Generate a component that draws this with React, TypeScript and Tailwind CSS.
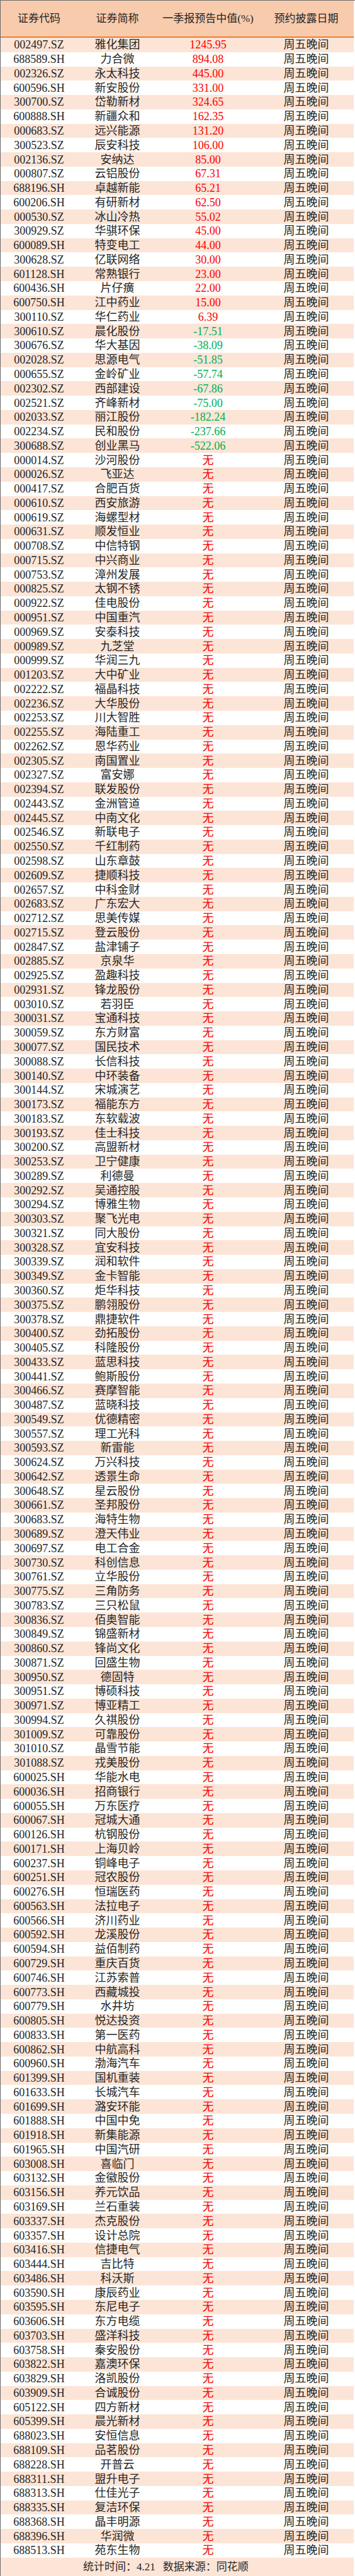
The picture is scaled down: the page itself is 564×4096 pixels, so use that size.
const raw = `002497.SZ 雅化集团 1245.95
688589.SH 力合微 894.08
002326.SZ 永太科技 445.00
600596.SH 新安股份 331.00
300700.SZ 岱勒新材 324.65
600888.SH 新疆众和 162.35
000683.SZ 远兴能源 131.20
300523.SZ 辰安科技 106.00
002136.SZ 安纳达 85.00
000807.SZ 云铝股份 67.31
688196.SH 卓越新能 65.21
600206.SH 有研新材 62.50
000530.SZ 冰山冷热 55.02
300929.SZ 华骐环保 45.00
600089.SH 特变电工 44.00
300628.SZ 亿联网络 30.00
601128.SH 常熟银行 23.00
600436.SH 片仔癀 22.00
600750.SH 江中药业 15.00
300110.SZ 华仁药业 6.39
300610.SZ 晨化股份 -17.51
300676.SZ 华大基因 -38.09
002028.SZ 思源电气 -51.85
000655.SZ 金岭矿业 -57.74
002302.SZ 西部建设 -67.86
002521.SZ 齐峰新材 -75.00
002033.SZ 丽江股份 -182.24
002234.SZ 民和股份 -237.66
300688.SZ 创业黑马 -522.06
000014.SZ 沙河股份
000026.SZ 飞亚达
000417.SZ 合肥百货
000610.SZ 西安旅游
000619.SZ 海螺型材
000631.SZ 顺发恒业
000708.SZ 中信特钢
000715.SZ 中兴商业
000753.SZ 漳州发展
000825.SZ 太钢不锈
000922.SZ 佳电股份
000951.SZ 中国重汽
000969.SZ 安泰科技
000989.SZ 九芝堂
000999.SZ 华润三九
001203.SZ 大中矿业
002222.SZ 福晶科技
002236.SZ 大华股份
002253.SZ 川大智胜
002255.SZ 海陆重工
002262.SZ 恩华药业
002305.SZ 南国置业
002327.SZ 富安娜
002394.SZ 联发股份
002443.SZ 金洲管道
002445.SZ 中南文化
002546.SZ 新联电子
002550.SZ 千红制药
002598.SZ 山东章鼓
002609.SZ 捷顺科技
002657.SZ 中科金财
002683.SZ 广东宏大
002712.SZ 思美传媒
002715.SZ 登云股份
002847.SZ 盐津铺子
002885.SZ 京泉华
002925.SZ 盈趣科技
002931.SZ 锋龙股份
003010.SZ 若羽臣
300031.SZ 宝通科技
300059.SZ 东方财富
300077.SZ 国民技术
300088.SZ 长信科技
300140.SZ 中环装备
300144.SZ 宋城演艺
300173.SZ 福能东方
300183.SZ 东软载波
300193.SZ 佳士科技
300200.SZ 高盟新材
300253.SZ 卫宁健康
300289.SZ 利德曼
300292.SZ 吴通控股
300294.SZ 博雅生物
300303.SZ 聚飞光电
300321.SZ 同大股份
300328.SZ 宜安科技
300339.SZ 润和软件
300349.SZ 金卡智能
300360.SZ 炬华科技
300375.SZ 鹏翎股份
300378.SZ 鼎捷软件
300400.SZ 劲拓股份
300405.SZ 科隆股份
300433.SZ 蓝思科技
300441.SZ 鲍斯股份
300466.SZ 赛摩智能
300487.SZ 蓝晓科技
300549.SZ 优德精密
300557.SZ 理工光科
300593.SZ 新雷能
300624.SZ 万兴科技
300642.SZ 透景生命
300648.SZ 星云股份
300661.SZ 圣邦股份
300683.SZ 海特生物
300689.SZ 澄天伟业
300697.SZ 电工合金
300730.SZ 科创信息
300761.SZ 立华股份
300775.SZ 三角防务
300783.SZ 三只松鼠
300836.SZ 佰奥智能
300849.SZ 锦盛新材
300860.SZ 锋尚文化
300871.SZ 回盛生物
300950.SZ 德固特
300951.SZ 博硕科技
300971.SZ 博亚精工
300994.SZ 久祺股份
301009.SZ 可靠股份
301010.SZ 晶雪节能
301088.SZ 戎美股份
600025.SH 华能水电
600036.SH 招商银行
600055.SH 万东医疗
600067.SH 冠城大通
600126.SH 杭钢股份
600171.SH 上海贝岭
600237.SH 铜峰电子
600251.SH 冠农股份
600276.SH 恒瑞医药
600563.SH 法拉电子
600566.SH 济川药业
600592.SH 龙溪股份
600594.SH 益佰制药
600729.SH 重庆百货
600746.SH 江苏索普
600773.SH 西藏城投
600779.SH 水井坊
600805.SH 悦达投资
600833.SH 第一医药
600862.SH 中航高科
600960.SH 渤海汽车
601399.SH 国机重装
601633.SH 长城汽车
601699.SH 潞安环能
601888.SH 中国中免
601918.SH 新集能源
601965.SH 中国汽研
603008.SH 喜临门
603132.SH 金徽股份
603156.SH 养元饮品
603169.SH 兰石重装
603337.SH 杰克股份
603357.SH 设计总院
603416.SH 信捷电气
603444.SH 吉比特
603486.SH 科沃斯
603590.SH 康辰药业
603595.SH 东尼电子
603606.SH 东方电缆
603703.SH 盛洋科技
603758.SH 秦安股份
603822.SH 嘉澳环保
603829.SH 洛凯股份
603909.SH 合诚股份
605122.SH 四方新材
605399.SH 晨光新材
688023.SH 安恒信息
688109.SH 品茗股份
688228.SH 开普云
688311.SH 盟升电子
688313.SH 仕佳光子
688335.SH 复洁环保
688368.SH 晶丰明源
688396.SH 华润微
688513.SH 苑东生物`;

type Row = { code: string; name: string; value: string };

const rows: Row[] = raw.split("\n").map((line) => {
  const [code, name, value] = line.trim().split(" ");
  return { code, name, value: value ?? "无" };
});

const headers = ["证券代码", "证券简称", "一季报预告中值(%)", "预约披露日期"];

const font = { fontFamily: '"Liberation Serif", "Noto Sans CJK SC", serif' };

export default function App() {
  return (
    <div className="w-[564px] bg-white text-[#262626]" style={font}>
      <div className="border-l border-t border-[#6b6b6b] pr-[2px]">
        {/* Header */}
        <div className="grid grid-cols-[122px_127px_161px_151px] h-[59px] bg-[#f8cbad] border-b-2 border-[#ed7d31] text-[17px]">
          {headers.map((h) => (
            <div key={h} className="flex items-center justify-center">
              {h}
            </div>
          ))}
        </div>

        {/* Body */}
        {rows.map((r, i) => (
          <div
            key={r.code}
            className={
              "grid grid-cols-[122px_127px_161px_151px] h-[22.77px] items-center text-[18px] leading-none " +
              (i % 2 === 0 ? "bg-[#fce4d6]" : "bg-white")
            }
          >
            <div className="text-center">{r.code}</div>
            <div className="text-center">{r.name}</div>
            <div
              className={
                "text-center " + (r.value.startsWith("-") ? "text-[#00b050]" : "text-[#ff0000]")
              }
            >
              {r.value}
            </div>
            <div className="text-center">周五晚间</div>
          </div>
        ))}

        {/* Footer */}
        <div className="h-[29px] bg-[#fce4d6] flex items-center pl-[131px] gap-[12px] text-[17px]">
          <span>统计时间：4.21</span>
          <span>数据来源：同花顺</span>
        </div>
      </div>
    </div>
  );
}
